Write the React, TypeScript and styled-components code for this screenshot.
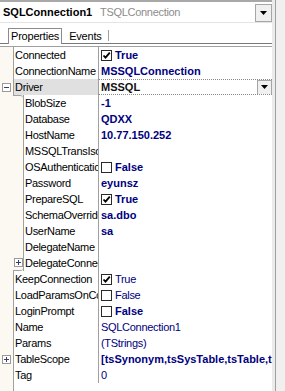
import React from 'react'
import styled, { createGlobalStyle } from 'styled-components'

const GlobalStyle = createGlobalStyle`
    html, body {
        margin: 0;
        padding: 0;
        background: #f0f0f0;
    }
    body {
        font-family: "Liberation Sans", Arial, sans-serif;
        font-size: 11px;
        color: #000;
    }
`

interface Prop {
    name: string
    value?: string
    bold?: boolean
    check?: boolean
    level?: number
    expander?: 'plus' | 'minus'
    selected?: boolean
    first?: boolean
    last?: boolean
}

const props: Prop[] = [
    { name: 'Connected', value: 'True', bold: true, check: true },
    { name: 'ConnectionName', value: 'MSSQLConnection', bold: true },
    { name: 'Driver', value: 'MSSQL', bold: true, expander: 'minus', selected: true },
    { name: 'BlobSize', value: '-1', bold: true, level: 1, first: true },
    { name: 'Database', value: 'QDXX', bold: true, level: 1 },
    { name: 'HostName', value: '10.77.150.252', bold: true, level: 1 },
    { name: 'MSSQLTransIsolation', level: 1 },
    { name: 'OSAuthentication', value: 'False', bold: true, check: false, level: 1 },
    { name: 'Password', value: 'eyunsz', bold: true, level: 1 },
    { name: 'PrepareSQL', value: 'True', bold: true, check: true, level: 1 },
    { name: 'SchemaOverride', value: 'sa.dbo', bold: true, level: 1 },
    { name: 'UserName', value: 'sa', bold: true, level: 1 },
    { name: 'DelegateName', level: 1 },
    { name: 'DelegateConnection', expander: 'plus', level: 1, last: true },
    { name: 'KeepConnection', value: 'True', check: true },
    { name: 'LoadParamsOnConnect', value: 'False', check: false },
    { name: 'LoginPrompt', value: 'False', bold: true, check: false },
    { name: 'Name', value: 'SQLConnection1' },
    { name: 'Params', value: '(TStrings)' },
    { name: 'TableScope', value: '[tsSynonym,tsSysTable,tsTable,tsView]', bold: true, expander: 'plus' },
    { name: 'Tag', value: '0' },
]

const DownArrow = () => (
    <svg width="7" height="4" viewBox="0 0 7 4">
        <path d="M0 0h7L3.5 4z" fill="#000" />
    </svg>
)

const Expander = ({ kind }: { kind: 'plus' | 'minus' }) => (
    <svg width="9" height="9" viewBox="0 0 9 9">
        <rect x="0.5" y="0.5" width="8" height="8" fill="#fff" stroke="#9a9a9a" />
        <path d="M2 4.5h5" stroke="#3c3c6c" />
        {kind === 'plus' && <path d="M4.5 2v5" stroke="#3c3c6c" />}
    </svg>
)

const CheckBox = ({ checked }: { checked: boolean }) => (
    <Box>
        {checked &&
            <svg width="9" height="9" viewBox="0 0 9 9">
                <path d="M1.5 4.5l2 2.2L7.8 1.6" stroke="#000" strokeWidth="1.8" fill="none" />
            </svg>
        }
    </Box>
)

const Row = ({ p }: { p: Prop }) => {
    const level = p.level || 0
    return (
        <RowLine>
            <Gutter>
                <Base>{p.expander && level === 0 && <Expander kind={p.expander} />}</Base>
                {level > 0 &&
                    <Step $top={!!p.first} $bottom={!!p.last}>
                        {p.expander && <Expander kind={p.expander} />}
                    </Step>
                }
            </Gutter>
            <NameCell $selected={!!p.selected}>{p.name}</NameCell>
            <ValueCell $editing={!!p.selected}>
                {p.check !== undefined && <CheckBox checked={p.check} />}
                {p.value && <Value $bold={!!p.bold} $editing={!!p.selected}>{p.value}</Value>}
                {p.selected && <EditButton><DownArrow /></EditButton>}
            </ValueCell>
        </RowLine>
    )
}

export default () => (
    <Window>
        <GlobalStyle />
        <Frame>
            <Inspector>
                <Combo>
                    <ComboName>SQLConnection1</ComboName>
                    <ComboType>TSQLConnection</ComboType>
                    <ComboButton><DownArrow /></ComboButton>
                </Combo>
                <TabStrip>
                    <Tab $active>Properties</Tab>
                    <Tab>Events</Tab>
                    <TabSep />
                </TabStrip>
                <Gap />
                <Grid>
                    {props.map((p, index) =>
                        <Row key={index} p={p} />
                    )}
                    <GridFill>
                        <Base />
                        <FillName />
                    </GridFill>
                </Grid>
            </Inspector>
        </Frame>
    </Window>
)

const Window = styled.div`
    width: 285px;
    height: 391px;
    display: flex;
    overflow: hidden;
`

const Frame = styled.div`
    display: flex;
    border-right: 1px solid #a0a0a0;
`

const Inspector = styled.div`
    width: 272px;
    display: flex;
    flex-direction: column;
    background: #fff;
    border-right: 3px solid #ebebeb;
`

const Combo = styled.div`
    height: 20px;
    display: flex;
    align-items: center;
    padding-left: 3px;
    border-top: 2px solid #a8a8a8;
    border-bottom: 1px solid #e4e4e4;
`

const ComboName = styled.span`
    font-weight: bold;
    width: 97px;
`

const ComboType = styled.span`
    color: #8c8c8c;
    letter-spacing: -0.3px;
`

const ComboButton = styled.div`
    margin-left: auto;
    width: 15px;
    height: 16px;
    margin-top: 1px;
    border: 1px solid #a6a6a6;
    background: #f0f0f0;
    display: flex;
    align-items: center;
    justify-content: center;
`

const TabStrip = styled.div`
    height: 20px;
    display: flex;
    align-items: flex-end;
    padding-left: 8px;
    border-bottom: 1px solid #787878;
`

const Tab = styled.div<{ $active?: boolean }>`
    height: 15px;
    line-height: 14px;
    padding: 0 2px;
    letter-spacing: -0.2px;
    margin-bottom: ${p => p.$active ? '-1px' : '0'};
    margin-right: ${p => p.$active ? '4px' : '3px'};
    background: #fff;
    border: ${p => p.$active ? '1px solid #8c8c8c' : '1px solid transparent'};
    border-bottom: none;
    height: ${p => p.$active ? '15px' : '14px'};
`

const TabSep = styled.div`
    width: 1px;
    height: 11px;
    margin-bottom: 2px;
    background: #a0a0a0;
`

const Gap = styled.div`
    height: 2px;
`

const Grid = styled.div`
    flex: 1;
    display: flex;
    flex-direction: column;
    border-top: 1px solid #a0a0a0;
`

const RowLine = styled.div`
    height: 16px;
    display: flex;
    flex-shrink: 0;
`

const Gutter = styled.div`
    display: flex;
    flex-shrink: 0;
    background: #fbf9f1;
`

const Base = styled.div`
    width: 13px;
    display: flex;
    align-items: center;
    padding-left: 2px;
    box-sizing: border-box;
    background: #fbf9f1;
`

const Step = styled.div<{ $top: boolean, $bottom: boolean }>`
    width: 10px;
    box-sizing: border-box;
    display: flex;
    align-items: center;
    justify-content: center;
    border-top: ${p => p.$top ? '1px solid #a0a0a0' : 'none'};
    border-bottom: ${p => p.$bottom ? '1px solid #a0a0a0' : 'none'};
    border-top-right-radius: ${p => p.$top ? '3px' : '0'};
    border-bottom-right-radius: ${p => p.$bottom ? '3px' : '0'};
`

const NameCell = styled.div<{ $selected: boolean }>`
    flex: 1;
    min-width: 0;
    overflow: hidden;
    white-space: nowrap;
    line-height: 16px;
    padding-left: 1px;
    letter-spacing: -0.3px;
    border-left: 1px solid #a0a0a0;
    background: ${p => p.$selected ? '#e0e0e0' : '#fff'};
`

const ValueCell = styled.div<{ $editing: boolean }>`
    width: 174px;
    flex-shrink: 0;
    box-sizing: border-box;
    display: flex;
    align-items: center;
    padding-left: 2px;
    overflow: hidden;
    white-space: nowrap;
    border-left: 1px solid #a0a0a0;
    border-top: ${p => p.$editing ? '1px dotted #8a8a8a' : 'none'};
    border-bottom: ${p => p.$editing ? '1px dotted #8a8a8a' : 'none'};
`

const Box = styled.div`
    width: 11px;
    height: 11px;
    box-sizing: border-box;
    border: 1px solid #2a2a2a;
    background: #fff;
    display: flex;
    align-items: center;
    justify-content: center;
    margin-right: 3px;
    flex-shrink: 0;
`

const Value = styled.span<{ $bold: boolean, $editing: boolean }>`
    font-weight: ${p => p.$bold ? 'bold' : 'normal'};
    color: ${p => p.$editing ? '#111' : '#000080'};
    letter-spacing: ${p => p.$bold ? '0' : '-0.3px'};
`

const EditButton = styled.div`
    margin-left: auto;
    width: 13px;
    height: 13px;
    border: 1px solid #a6a6a6;
    background: #f0f0f0;
    display: flex;
    align-items: center;
    justify-content: center;
    flex-shrink: 0;
`

const GridFill = styled.div`
    flex: 1;
    display: flex;
`

const FillName = styled.div`
    flex: 1;
    border-left: 1px solid #a0a0a0;
`
